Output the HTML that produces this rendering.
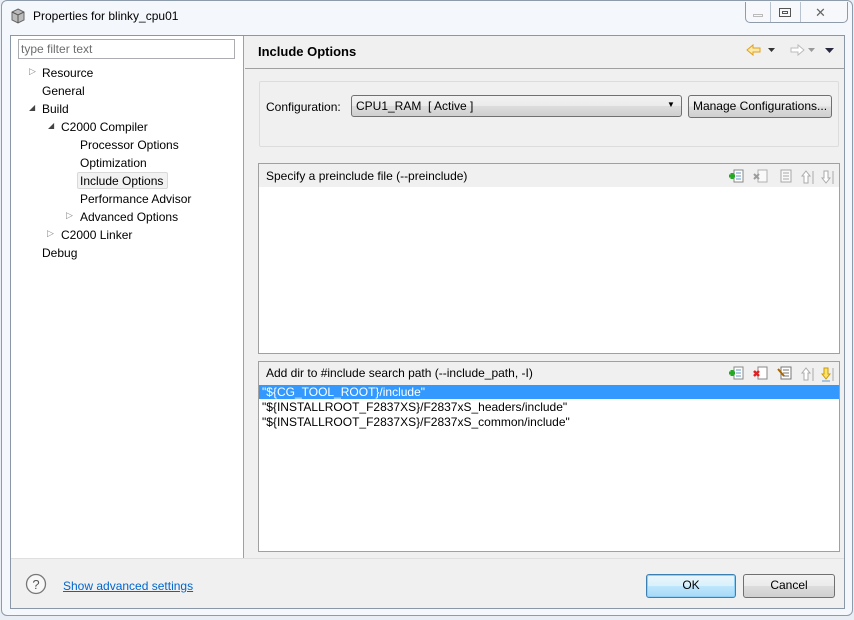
<!DOCTYPE html>
<html><head><style>
*{margin:0;padding:0;box-sizing:border-box}
body{width:854px;height:620px;overflow:hidden;background:#fff;font-family:"Liberation Sans",sans-serif;font-size:12px;color:#000;position:relative}
.a{position:absolute}
.t{position:absolute;white-space:nowrap}
.btn{position:absolute;border:1px solid #707070;border-radius:3px;background:linear-gradient(#f2f2f2,#ebebeb 50%,#dddddd 51%,#cfcfcf);text-align:center;line-height:21px}
.ic{position:absolute;width:14px;height:16px}
</style></head><body>
<!-- window frame -->
<div class="a" style="left:0;top:0;width:854px;height:620px;background:#e9eef5"></div>
<div class="a" style="left:1px;top:0;width:852px;height:616px;background:#f4f7fb;border:1px solid #8e9bab;border-radius:6px"></div>
<!-- title -->
<svg class="a" style="left:10px;top:8px" width="16" height="16"><path d="M8 1L14 4V12L8 15L2 12V4Z" fill="#bbb" stroke="#666"/><path d="M2 4L8 7L14 4M8 7V15" stroke="#555" fill="none"/></svg>
<div class="t" style="left:33px;top:9px;font-size:12px">Properties for blinky_cpu01</div>
<div class="a" style="left:745px;top:2px;width:103px;height:21px;border:1px solid #8e9bab;border-top:none;border-radius:0 0 5px 5px;background:#f6f8fb"></div>
<div class="a" style="left:770px;top:2px;width:1px;height:20px;background:#b8c2cf"></div>
<div class="a" style="left:800px;top:2px;width:1px;height:20px;background:#b8c2cf"></div>
<div class="a" style="left:753px;top:14px;width:10px;height:3px;border:1px solid #bbb"></div>
<div class="a" style="left:779px;top:8px;width:12px;height:9px;border:1px solid #555"><div class="a" style="left:2px;top:2px;width:6px;height:3px;border:1px solid #555"></div></div>
<div class="t" style="left:815px;top:5px;font-size:13px;color:#666">✕</div>
<!-- client -->
<div class="a" style="left:10px;top:35px;width:835px;height:574px;border:1px solid #8a97a6;background:#f0f0f0"></div>
<div class="a" style="left:11px;top:36px;width:233px;height:522px;background:#fff;border-right:1px solid #a0a0a0"></div>
<div class="a" style="left:18px;top:39px;width:217px;height:20px;border:1px solid #abadb3;background:#fff"></div>
<div class="t" style="left:21px;top:42px;color:#6d6d6d">type filter text</div>
<div class="t" style="left:29px;top:66px;color:#888;font-size:9px">▷</div>
<div class="t" style="left:42px;top:66px">Resource</div>
<div class="t" style="left:42px;top:84px">General</div>
<div class="t" style="left:29px;top:103px;color:#444;font-size:8px">◢</div>
<div class="t" style="left:42px;top:102px">Build</div>
<div class="t" style="left:48px;top:121px;color:#444;font-size:8px">◢</div>
<div class="t" style="left:61px;top:120px">C2000 Compiler</div>
<div class="t" style="left:80px;top:138px">Processor Options</div>
<div class="t" style="left:80px;top:156px">Optimization</div>
<div class="a" style="left:77px;top:172px;width:91px;height:17px;border:1px solid #d9d9d9;border-radius:2px;background:#f2f2f2"></div>
<div class="t" style="left:80px;top:174px">Include Options</div>
<div class="t" style="left:80px;top:192px">Performance Advisor</div>
<div class="t" style="left:66px;top:210px;color:#888;font-size:9px">▷</div>
<div class="t" style="left:80px;top:210px">Advanced Options</div>
<div class="t" style="left:47px;top:228px;color:#888;font-size:9px">▷</div>
<div class="t" style="left:61px;top:228px">C2000 Linker</div>
<div class="t" style="left:42px;top:246px">Debug</div>
<!-- right header -->
<div class="a" style="left:245px;top:68px;width:599px;height:1px;background:#a0a0a0"></div>
<div class="t" style="left:258px;top:44px;font-weight:bold;font-size:13px">Include Options</div>
<svg class="a" style="left:746px;top:42px" width="90" height="16"><path d="M1 8L7 3V6H14V10H7V13Z" fill="#fde9a8" stroke="#e0a020"/><path d="M22 6h7l-3.5 4z" fill="#333"/><path d="M52 6H45V10H52V13L58 8L52 3Z" fill="#fff" stroke="#bbb"/><path d="M62 6h7l-3.5 4z" fill="#999"/><path d="M79 6h9l-4.5 5z" fill="#2a2840"/></svg>
<!-- config group -->
<div class="a" style="left:259px;top:81px;width:580px;height:66px;border:1px solid #dcdcdc;background:#f0f0f0;border-radius:2px"></div>
<div class="t" style="left:266px;top:100px">Configuration:</div>
<div class="a" style="left:351px;top:95px;width:331px;height:22px;border:1px solid #707070;border-radius:3px;background:linear-gradient(#f2f2f2,#ebebeb 50%,#dddddd 51%,#cfcfcf)"></div>
<div class="t" style="left:356px;top:99px">CPU1_RAM&nbsp; [ Active ]</div>
<div class="t" style="left:667px;top:100px;font-size:8px">▼</div>
<div class="btn" style="left:688px;top:95px;width:144px;height:23px">Manage Configurations...</div>
<!-- box 1 -->
<div class="a" style="left:258px;top:163px;width:582px;height:191px;border:1px solid #a0a0a0;background:#fff"></div>
<div class="a" style="left:259px;top:164px;width:580px;height:23px;background:#f0f0f0"></div>
<div class="t" style="left:266px;top:169px">Specify a preinclude file (--preinclude)</div>
<!-- box 2 -->
<div class="a" style="left:258px;top:361px;width:582px;height:191px;border:1px solid #a0a0a0;background:#fff"></div>
<div class="a" style="left:259px;top:362px;width:580px;height:23px;background:#f0f0f0"></div>
<div class="t" style="left:266px;top:366px">Add dir to #include search path (--include_path, -I)</div>
<div class="a" style="left:259px;top:385px;width:580px;height:14px;background:#3399ff"></div>
<div class="t" style="left:262px;top:385px;color:#fff">"${CG_TOOL_ROOT}/include"</div>
<div class="t" style="left:262px;top:400px">"${INSTALLROOT_F2837XS}/F2837xS_headers/include"</div>
<div class="t" style="left:262px;top:415px">"${INSTALLROOT_F2837XS}/F2837xS_common/include"</div>
<!-- toolbar icons -->
<svg class="a" style="left:727px;top:168px" width="108" height="18"><g><rect x="7" y="2" width="9" height="12" fill="#fff" stroke="#888"/><path d="M9 5h5M9 8h5M9 11h5" stroke="#69c"/><path d="M2 8h6M5 5v6" stroke="#2a2" stroke-width="3"/></g><g transform="translate(24,0)" opacity=".6"><rect x="7" y="2" width="9" height="12" fill="#fff" stroke="#888"/><path d="M3 6l5 5M8 6l-5 5" stroke="#666" stroke-width="2"/></g><g transform="translate(48,0)" opacity=".6"><rect x="6" y="2" width="10" height="12" fill="#fff" stroke="#777"/><path d="M8 5h6M8 8h6M8 11h6" stroke="#777"/></g><path d="M75 8l4-5 4 5h-2v7h-4v-7z" fill="#fff" stroke="#aaa"/><path d="M86 3v13" stroke="#aaa"/><path d="M95 10l4 5 4-5h-2v-7h-4v7z" fill="#fff" stroke="#aaa"/><path d="M106 3v13" stroke="#aaa"/></svg>
<svg class="a" style="left:727px;top:365px" width="108" height="18"><g><rect x="7" y="2" width="9" height="12" fill="#fff" stroke="#888"/><path d="M9 5h5M9 8h5M9 11h5" stroke="#69c"/><path d="M2 8h6M5 5v6" stroke="#2a2" stroke-width="3"/></g><g transform="translate(24,0)"><rect x="7" y="2" width="9" height="12" fill="#fff" stroke="#888"/><path d="M3 6l5 5M8 6l-5 5" stroke="#d22" stroke-width="2.5"/></g><g transform="translate(48,0)"><rect x="6" y="2" width="10" height="12" fill="#fff" stroke="#777"/><path d="M8 5h6M8 8h6M8 11h6" stroke="#777"/><path d="M3 4l6 7" stroke="#a60" stroke-width="2"/></g><path d="M75 8l4-5 4 5h-2v7h-4v-7z" fill="#fff" stroke="#aaa"/><path d="M86 3v13" stroke="#aaa"/><path d="M95 9l4 5 4-5h-2v-6h-4v6z" fill="#fde36a" stroke="#c90"/><path d="M95 16h8" stroke="#69c"/><path d="M106 3v13" stroke="#aaa"/></svg>
<!-- bottom -->
<div class="a" style="left:11px;top:558px;width:833px;height:1px;background:#dfdfdf"></div>
<svg class="a" style="left:25px;top:573px" width="22" height="22"><circle cx="11" cy="11" r="9.5" fill="#f8f8f8" stroke="#777" stroke-width="1.3"/><text x="11" y="16" font-family="Liberation Sans" font-size="13" text-anchor="middle" fill="#555">?</text></svg>
<div class="t" style="left:63px;top:579px;color:#0066cc;text-decoration:underline">Show advanced settings</div>
<div class="btn" style="left:646px;top:574px;width:90px;height:24px;border-color:#3c7fb1;background:linear-gradient(#eaf6fd,#d9f0fc 50%,#bee6fd 51%,#a7d9f5);box-shadow:inset 0 0 0 1px #8ed0f5">OK</div>
<div class="btn" style="left:743px;top:574px;width:92px;height:24px">Cancel</div>
</body></html>
